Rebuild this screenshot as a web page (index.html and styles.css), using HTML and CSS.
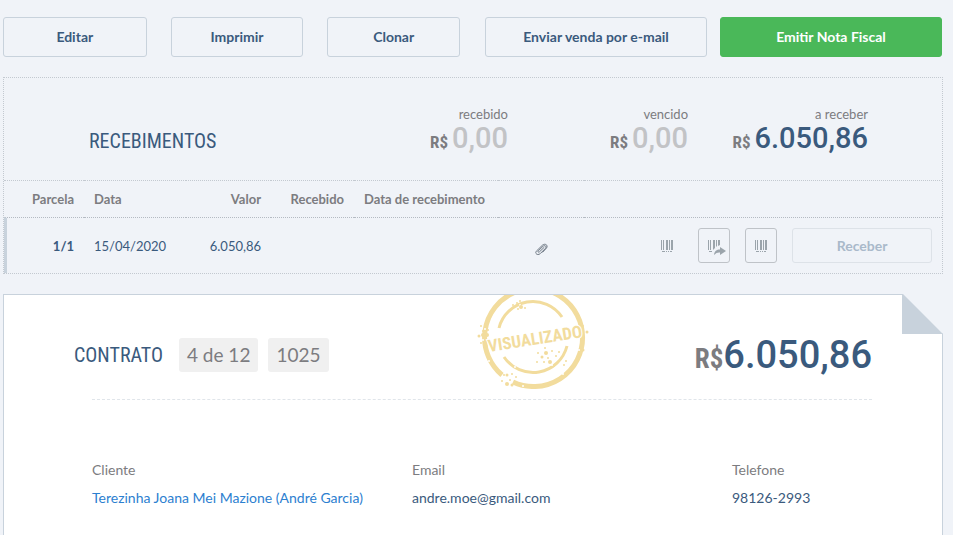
FILE: index.html
```
<!DOCTYPE html>
<html lang="pt-BR">
<head>
<meta charset="utf-8">
<meta name="viewport" content="width=device-width, initial-scale=1">
<title>Venda</title>
<link rel="stylesheet" href="styles.css">
</head>
<body>
<svg class="sprite" aria-hidden="true">
  <symbol id="barcode" viewBox="0 0 12 12">
    <path d="M0 0h1v10H0zM2 0h1v10H2zM5 0h2v10H5zM8 0h1v10H8zM10 0h2v10h-2zM1 11h3v1H1zM5 11h1v1H5zM7 11h1v1H7zM9 11h2v1H9z"/>
  </symbol>
</svg>
<main class="page">
  <div class="toolbar">
    <div class="toolbar-group toolbar-edit">
      <button class="btn btn-wide" type="button">Editar</button>
      <button class="btn" type="button">Imprimir</button>
      <button class="btn" type="button">Clonar</button>
    </div>
    <div class="toolbar-group toolbar-send">
      <button class="btn" type="button">Enviar venda por e-mail</button>
      <button class="btn btn-primary" type="button">Emitir Nota Fiscal</button>
    </div>
  </div>

  <section class="receipts">
    <header class="receipts-head">
      <h2 class="title">RECEBIMENTOS</h2>
      <div class="total">
        <span class="total-label">recebido</span>
        <span class="amount muted"><span class="currency">R$</span>0,00</span>
      </div>
      <div class="total">
        <span class="total-label">vencido</span>
        <span class="amount muted"><span class="currency">R$</span>0,00</span>
      </div>
      <div class="total">
        <span class="total-label">a receber</span>
        <span class="amount"><span class="currency">R$</span>6.050,86</span>
      </div>
    </header>
    <table class="installments">
      <colgroup>
        <col class="col-part"><col class="col-date"><col class="col-value"><col class="col-paid"><col class="col-paid-date"><col class="col-clip"><col>
      </colgroup>
      <thead>
        <tr>
          <th class="right">Parcela</th><th>Data</th><th class="right">Valor</th><th class="right">Recebido</th><th>Data de recebimento</th><th></th><th></th>
        </tr>
      </thead>
      <tbody>
        <tr>
          <td class="right part">1/1</td><td>15/04/2020</td><td class="right">6.050,86</td><td></td><td></td>
          <td class="clip">
            <svg class="clip-icon" viewBox="0 0 14 13" role="img" aria-label="Anexo"><path d="M10.300 4.200 5.400 8.900c-.9.800-2 0-1.200-1L9.100 3.200c1.700-1.500 3.900.2 2.400 2.100L6.400 10.500c-2.400 2.300-6 .3-4.100-2.300L8.400 2.200c2.500-2.200 6-.2 4.200 2.700L8.500 9.400"/></svg>
          </td>
          <td>
            <div class="actions">
              <button class="icon-btn icon-plain" type="button" aria-label="Boleto"><svg class="bar-icon"><use href="#barcode"/></svg></button>
              <button class="icon-btn" type="button" aria-label="Enviar boleto">
                <svg class="share-icon" viewBox="0 0 18 16"><path d="M0 0h1v10H0zM2 0h1v10H2zM5 0h2v8l-2 2zM8 0h1v6l-1 1zM10 0h2v5l-2 1zM1 11h3v1H1z"/><path d="M6 15c.5-4 2.500-5.500 6-5.500V7l6 4-6 4v-2.500c-2.500-.2-4 .5-6 2.500z"/></svg>
              </button>
              <button class="icon-btn" type="button" aria-label="Imprimir boleto"><svg class="bar-icon"><use href="#barcode"/></svg></button>
              <button class="receive" type="button">Receber</button>
            </div>
          </td>
        </tr>
      </tbody>
    </table>
  </section>

  <section class="contract">
    <svg class="stamp" viewBox="0 0 116 94" role="img">
      <g class="ring">
        <path class="outer" d="M27 80A49 49 0 1 1 38 87"/>
        <path class="inner" d="M24 33A35 35 0 0 1 87 22"/>
        <path class="inner" d="M29 62A35 35 0 0 0 92 51"/>
      </g>
      <text class="stamp-text" transform="translate(14 57) rotate(-9)">VISUALIZADO</text>
      <g class="chip">
        <circle cx="10" cy="34" r="1"/><circle cx="14" cy="66" r="1"/><circle cx="8" cy="45" r="1"/><circle cx="45" cy="10" r="1"/><circle cx="88" cy="79" r="1"/><circle cx="104" cy="55" r="1"/><circle cx="77" cy="70" r="1"/><circle cx="40" cy="72" r="1"/><circle cx="48" cy="91" r="1"/>
      </g>
      <g class="ink">
        <circle cx="6" cy="31" r="1"/><circle cx="8" cy="36" r="1"/><circle cx="4" cy="41" r="1.500"/><circle cx="8" cy="40" r="2"/><circle cx="6" cy="48" r="1"/><circle cx="11" cy="51" r="1.500"/><circle cx="13" cy="35" r="1"/><circle cx="12" cy="40" r="2"/>
        <circle cx="38" cy="10" r="1"/><circle cx="42" cy="8" r="1"/><circle cx="46" cy="12" r="2"/><circle cx="50" cy="13" r="1"/><circle cx="43" cy="14" r="1"/><circle cx="45" cy="6" r="1"/>
        <circle cx="108" cy="31" r="1"/><circle cx="112" cy="37" r="1.500"/><circle cx="109" cy="42" r="1"/><circle cx="108" cy="55" r="1.500"/>
        <circle cx="63" cy="58" r="1"/><circle cx="71" cy="58" r="2"/><circle cx="67" cy="62" r="1.500"/><circle cx="73" cy="63" r="1"/><circle cx="62" cy="67" r="1"/><circle cx="69" cy="67" r="1"/><circle cx="75" cy="67" r="2"/><circle cx="81" cy="61" r="1"/><circle cx="84" cy="57" r="1"/><circle cx="91" cy="66" r="1"/><circle cx="89" cy="70" r="1"/><circle cx="79" cy="71" r="1"/><circle cx="77" cy="56" r="1"/><circle cx="70" cy="53" r="1"/>
        <circle cx="29" cy="80" r="1"/><circle cx="32" cy="80" r="1.500"/><circle cx="37" cy="79" r="1"/><circle cx="27" cy="86" r="1"/><circle cx="32" cy="89" r="2"/><circle cx="37" cy="90" r="1.500"/><circle cx="35" cy="85" r="1"/><circle cx="41" cy="82" r="1"/>
      </g>
    </svg>
    <svg class="fold" viewBox="0 0 41 40" aria-hidden="true"><path class="fold-bg" d="M0 0h41v40z"/><path class="fold-flap" d="M0 0h1l40 40H0z"/></svg>
    <header class="contract-head">
      <h2 class="title">CONTRATO</h2>
      <span class="tag">4 de 12</span>
      <span class="tag">1025</span>
      <span class="grand"><span class="grand-currency">R$</span>6.050,86</span>
    </header>
    <dl class="details">
      <div><dt>Cliente</dt><dd><a href="#">Terezinha Joana Mei Mazione (André Garcia)</a></dd></div>
      <div><dt>Email</dt><dd>andre.moe@gmail.com</dd></div>
      <div><dt>Telefone</dt><dd>98126-2993</dd></div>
    </dl>
  </section>
</main>
</body>
</html>
```
FILE: styles.css
```
:root {
  --bg: #f0f3f8;
  --navy: #3a5a7d;
  --gray: #7c7c80;
  --line: #c8d2dc;
  --narrow: "Roboto Condensed", "Liberation Sans Narrow", Roboto, sans-serif;
}
* { box-sizing: border-box; }
html { min-height: 100%; background: var(--bg); }
body {
  margin: 0;
  height: 100vh;
  overflow: hidden;
  font: 14px/20px Lato, sans-serif;
  color: var(--gray);
}
button { font: inherit; cursor: pointer; }
.sprite { display: none; }
.page {
  display: flex;
  flex-direction: column;
  height: 100%;
  padding: 17px 10px 0 3px;
}
.toolbar { display: flex; gap: 25px; padding-right: 1px; }
.toolbar-group { display: flex; flex: 1 1 0; }
.toolbar-edit { gap: 24px; }
.toolbar-send { gap: 13px; }
.btn {
  flex: 12 1 0;
  height: 40px;
  padding: 0;
  border: 1px solid var(--line);
  border-radius: 3px;
  background: transparent;
  color: var(--navy);
  font-weight: bold;
}
.btn-wide { flex-grow: 13; }
.btn-primary { border-color: #4ab859; background: #4ab859; color: #fff; }

.receipts { margin-top: 20px; border: 1px dotted #c3c9d0; }
.receipts-head {
  display: grid;
  grid-template-columns: 1fr 180px 180px 180px;
  align-items: end;
  height: 102px;
  padding: 0 74px 26px 85px;
}
.title {
  margin: 0;
  font: 20px/26px var(--narrow);
  color: var(--navy);
}
.total { text-align: right; }
.total-label { display: block; font-size: 13px; line-height: 16px; }
.amount {
  display: block;
  font: 500 29px/32px Roboto, sans-serif;
  color: var(--navy);
  white-space: nowrap;
}
.amount.muted { color: #c2c3c6; }
.currency {
  margin-right: 4px;
  font: bold 17px/20px var(--narrow);
  color: var(--gray);
}

.installments {
  width: 100%;
  table-layout: fixed;
  border-collapse: separate;
  border-spacing: 0;
  font-size: 13px;
}
.col-part { width: 80px; }
.col-date { width: 102px; }
.col-value { width: 85px; }
.col-paid { width: 83px; }
.col-paid-date { width: 144px; }
.col-clip { width: 86px; }
th, td { padding: 0 10px; text-align: left; white-space: nowrap; }
th { height: 37px; border-top: 1px dotted #c3c9d0; }
td { height: 56px; border-top: 1px dotted #b4bac2; color: var(--navy); }
.right { text-align: right; }
.part { border-left: 3px solid var(--line); font-weight: bold; }
td.clip { padding-top: 4px; text-align: center; }
.clip-icon {
  width: 14px;
  height: 13px;
  vertical-align: middle;
  fill: none;
  stroke: #6f7985;
}
.actions { display: flex; justify-content: flex-end; gap: 15px; }
.icon-btn {
  display: flex;
  align-items: center;
  justify-content: center;
  width: 32px;
  height: 35px;
  padding: 0;
  border: 1px solid #bfc3c8;
  border-radius: 3px;
  background: transparent;
  fill: #9ba4ab;
}
.icon-plain { border-color: transparent; }
.bar-icon { width: 12px; height: 12px; }
.share-icon { width: 18px; height: 16px; margin: 4px 0 0 6px; }
.receive {
  width: 140px;
  height: 35px;
  padding: 0;
  border: 1px solid #dde2e8;
  border-radius: 3px;
  background: transparent;
  color: #a9b9ca;
  font-size: 14px;
  font-weight: bold;
}

.contract {
  position: relative;
  flex: 1;
  margin-top: 20px;
  padding: 0 70px 0 88px;
  border: 1px solid var(--line);
  border-bottom: 0;
  background: #fff;
}
.fold { position: absolute; top: -1px; right: -1px; width: 41px; height: 40px; }
.fold-bg { fill: var(--bg); }
.fold-flap { fill: var(--line); }
.stamp { position: absolute; top: 0; left: 50%; width: 116px; height: 94px; margin-left: 2px; overflow: hidden; }
.ring { fill: none; stroke: #f2dc9d; }
.outer { stroke-width: 5; }
.inner { stroke-width: 3; }
.ink { fill: #f2dc9d; }
.chip { fill: #fff; }
.stamp-text {
  font: bold 17px var(--narrow);
  fill: #f2dc9d;
  stroke: #fff;
  stroke-width: 2px;
  paint-order: stroke;
}
.contract-head {
  display: flex;
  align-items: center;
  gap: 10px;
  height: 104px;
  margin-left: -18px;
  padding-top: 15px;
}
.contract-head .title { margin-right: 6px; }
.tag {
  padding: 2px 8px;
  border-radius: 3px;
  background: #f0f0f0;
  font-size: 19px;
  line-height: 30px;
}
.grand {
  margin-left: auto;
  font: 500 38px/44px Roboto, sans-serif;
  color: var(--navy);
}
.grand-currency { font: bold 27px/30px var(--narrow); color: var(--gray); }
.details {
  display: grid;
  grid-template-columns: 16fr 16fr 7fr;
  margin: 0;
  padding-top: 56px;
  border-top: 1px dashed #e0e5ea;
  line-height: 28px;
  white-space: nowrap;
}
dd { margin: 0; color: var(--navy); }
a { color: #2c80d0; text-decoration: none; }
```
